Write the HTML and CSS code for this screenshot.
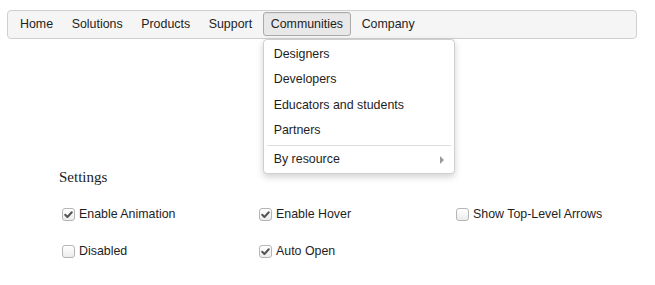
FILE: index.html
```html
<!DOCTYPE html>
<html>
<head>
<meta charset="utf-8">
<link rel="stylesheet" href="styles.css">
</head>
<body>
<div class="page">
  <nav class="menubar">
    <div class="item">Home</div>
    <div class="item">Solutions</div>
    <div class="item">Products</div>
    <div class="item">Support</div>
    <div class="item open">Communities
      <div class="dropdown">
        <div class="ditem">Designers</div>
        <div class="ditem">Developers</div>
        <div class="ditem">Educators and students</div>
        <div class="ditem">Partners</div>
        <div class="sep"></div>
        <div class="ditem sub">By resource<span class="arrow"></span></div>
      </div>
    </div>
    <div class="item">Company</div>
  </nav>

  <section class="settings">
    <h3 class="title">Settings</h3>
    <div class="grid">
      <label class="opt"><span class="box"><svg viewBox="0 0 13 13" width="13" height="13"><path d="M3.2 6.8 L5.4 9 L9.8 4.2" fill="none" stroke="#555" stroke-width="2" stroke-linecap="round" stroke-linejoin="round"/></svg></span>Enable Animation</label>
      <label class="opt"><span class="box"><svg viewBox="0 0 13 13" width="13" height="13"><path d="M3.2 6.8 L5.4 9 L9.8 4.2" fill="none" stroke="#555" stroke-width="2" stroke-linecap="round" stroke-linejoin="round"/></svg></span>Enable Hover</label>
      <label class="opt"><span class="box"></span>Show Top-Level Arrows</label>
      <label class="opt"><span class="box"></span>Disabled</label>
      <label class="opt"><span class="box"><svg viewBox="0 0 13 13" width="13" height="13"><path d="M3.2 6.8 L5.4 9 L9.8 4.2" fill="none" stroke="#555" stroke-width="2" stroke-linecap="round" stroke-linejoin="round"/></svg></span>Auto Open</label>
    </div>
  </section>
</div>
</body>
</html>
```

FILE: styles.css
```css
html, body {
  margin: 0;
  padding: 0;
  background: #fff;
}
.page {
  padding: 10px 18px 0 7px;
  font-family: "Liberation Sans", Arial, sans-serif;
  font-size: 12.4px;
  color: #1e1e1e;
}
.menubar {
  display: flex;
  align-items: center;
  background: #f5f5f5;
  border: 1px solid #cfcfcf;
  border-radius: 4px;
  padding: 1px 3px 2px 2.7px;
}
.item {
  position: relative;
  margin: 0 1.3px;
  padding: 0 7px;
  line-height: 22px;
  border: 1px solid transparent;
  border-radius: 3px;
  white-space: nowrap;
}
.item.open {
  background: #e8e8e8;
  border-color: #ababab;
  box-shadow: inset 0 1px 1px rgba(0,0,0,0.05);
}
.dropdown {
  position: absolute;
  left: -1px;
  top: calc(100% + 4px);
  width: 190px;
  background: #fff;
  border: 1px solid #cfcfcf;
  border-radius: 4px;
  box-shadow: 0 3px 7px rgba(0,0,0,0.18);
  padding: 2px 0 1px;
  z-index: 10;
}
.ditem {
  position: relative;
  height: 25.4px;
  line-height: 25px;
  padding: 0 10px;
}
.sep {
  height: 1px;
  margin: 1px 3px 1px;
  background: #dedede;
}
.arrow {
  position: absolute;
  right: 10px;
  top: 9px;
  width: 0;
  height: 0;
  border-top: 4px solid transparent;
  border-bottom: 4px solid transparent;
  border-left: 4px solid #9a9a9a;
}
.settings {
  padding-left: 52px;
  padding-top: 129px;
}
.title {
  margin: 0;
  font-family: "Liberation Serif", "Times New Roman", serif;
  font-weight: normal;
  font-size: 15px;
  line-height: 18px;
  color: #222;
}
.grid {
  display: grid;
  grid-template-columns: 197px 197px 197px;
  row-gap: 20px;
  margin-top: 20px;
  padding-left: 3px;
}
.opt {
  display: flex;
  align-items: center;
  line-height: 17px;
  white-space: nowrap;
}
.box {
  width: 13px;
  height: 13px;
  box-sizing: border-box;
  border: 1px solid #b5b5b5;
  border-radius: 3px;
  background: linear-gradient(#fff, #ececec);
  margin-right: 4px;
  display: flex;
  align-items: center;
  justify-content: center;
  overflow: hidden;
}
.box svg {
  display: block;
  flex: none;
}
```
